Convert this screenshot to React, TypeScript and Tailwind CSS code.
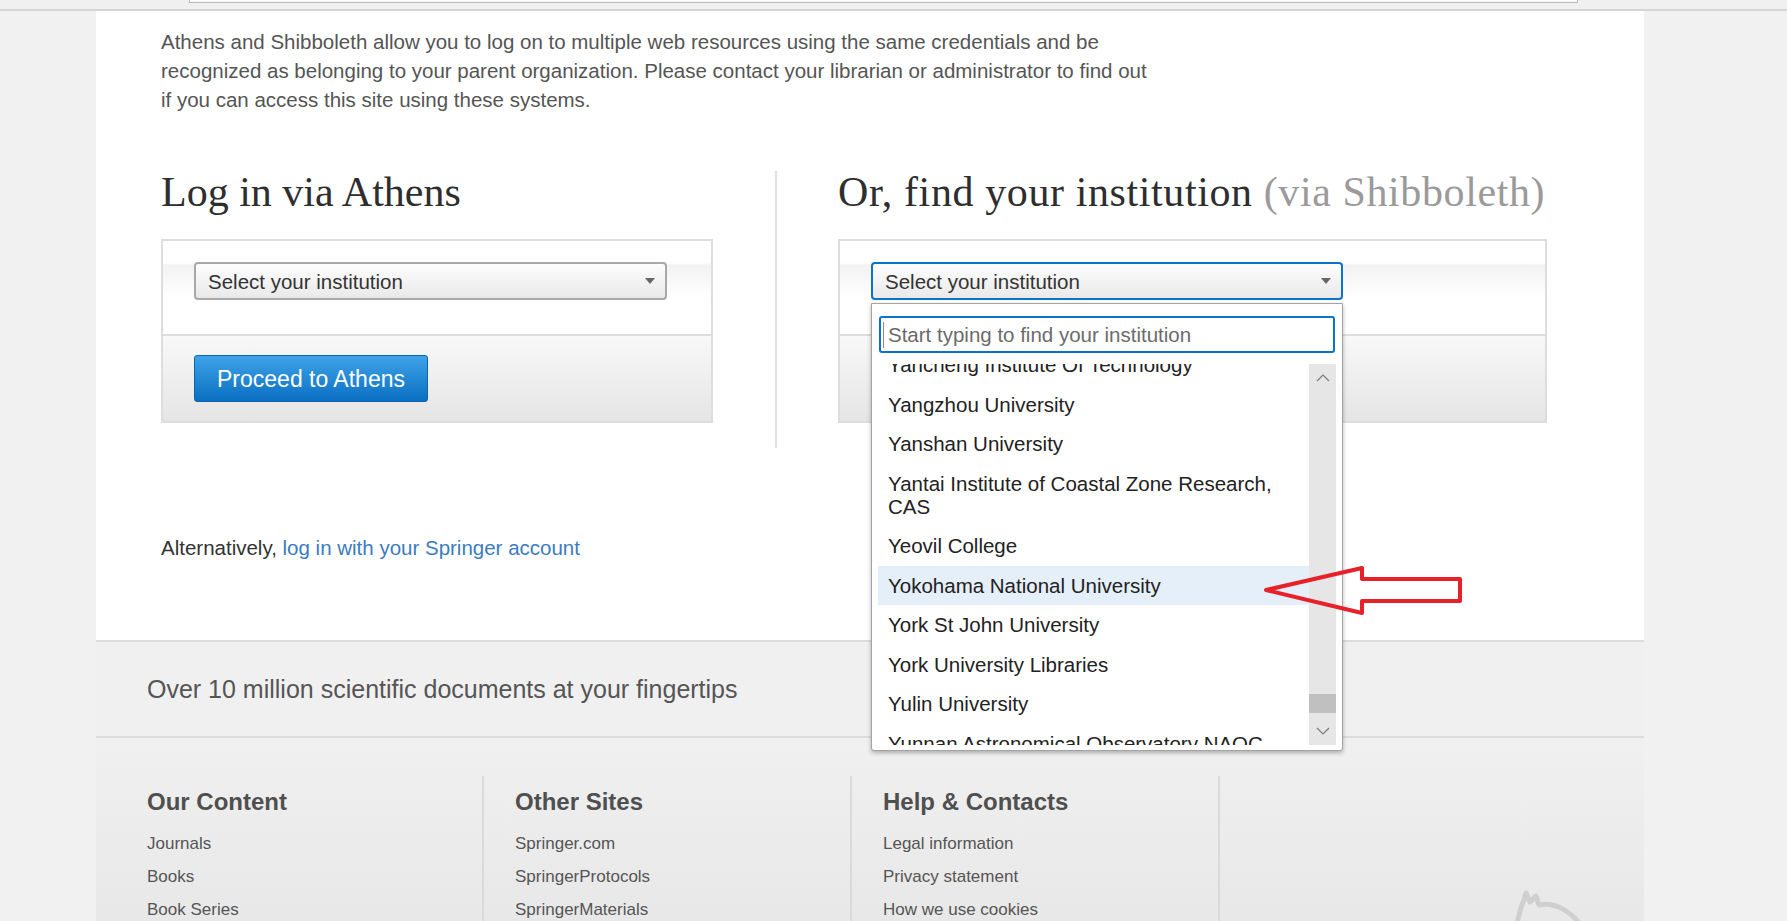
import React from "react";

const listItems: { label: string; active?: boolean }[] = [
  { label: "Yancheng Institute Of Technology" },
  { label: "Yangzhou University" },
  { label: "Yanshan University" },
  { label: "Yantai Institute of Coastal Zone Research, CAS" },
  { label: "Yeovil College" },
  { label: "Yokohama National University", active: true },
  { label: "York St John University" },
  { label: "York University Libraries" },
  { label: "Yulin University" },
  { label: "Yunnan Astronomical Observatory NAOC" },
];

function Caret() {
  return (
    <span className="w-0 h-0 border-l-[5px] border-r-[5px] border-t-[6px] border-l-transparent border-r-transparent border-t-[#666]" />
  );
}

function Chevron({ up }: { up?: boolean }) {
  return (
    <svg width="14" height="8" viewBox="0 0 14 8">
      <polyline
        points={up ? "1,7 7,1 13,7" : "1,1 7,7 13,1"}
        fill="none"
        stroke="#7a7a7a"
        strokeWidth="1.2"
      />
    </svg>
  );
}

function Dropdown() {
  return (
    <div className="absolute left-[-2px] top-[calc(100%+5px)] z-10 w-[472px] h-[448px] bg-white border border-[#a3a3a3] rounded-b-[3px] shadow-[0_2px_4px_rgba(0,0,0,0.28)] pt-[12px]">
      <div className="mx-[7px] h-[37px] border-2 border-[#0b73c9] rounded-[3px] flex items-center pl-[2px]">
        <span className="w-px h-[26px] bg-[#8a8a8a]" />
        <span className="ml-[4px] text-[20.5px] text-[#6b6b6b] leading-[23px]">
          Start typing to find your institution
        </span>
      </div>
      <div className="mx-[6px] mt-[11px] h-[381px] overflow-hidden flex">
        <div className="w-[431px] mt-[-19px]">
          {listItems.map((it) => (
            <div
              key={it.label}
              className={
                "pl-[10px] pr-[10px] py-[8.25px] text-[20.5px] leading-[23px] text-[#222] " +
                (it.active ? "bg-[#e5eff9]" : "")
              }
            >
              {it.label}
            </div>
          ))}
        </div>
        <div className="w-[27px] h-[381px] bg-[#e6e6e6] flex flex-col">
          <div className="h-[28px] flex items-center justify-center">
            <Chevron up />
          </div>
          <div className="h-[302px]" />
          <div className="h-[19px] bg-[#c0c0c0]" />
          <div className="h-[4px]" />
          <div className="h-[28px] flex items-center justify-center">
            <Chevron />
          </div>
        </div>
      </div>
    </div>
  );
}

function SelectBox({ focused, width }: { focused?: boolean; width: string }) {
  return (
    <div
      className={
        "relative h-[38px] rounded-[4px] border-2 bg-[linear-gradient(180deg,#fdfdfd,#e9e9e9)] flex items-center justify-between pl-[12px] pr-[10px] " +
        width +
        " " +
        (focused ? "border-[#0b73c9]" : "border-[#a8a8a8]")
      }
    >
      <span className="text-[20.5px] leading-[23px] text-[#333]">Select your institution</span>
      <Caret />
      {focused && <Dropdown />}
    </div>
  );
}

function LoginBox({
  width,
  selectWidth,
  focused,
  button,
}: {
  width: string;
  selectWidth: string;
  focused?: boolean;
  button?: boolean;
}) {
  return (
    <div className={"border-2 border-[#dddddd] " + width}>
      <div className="h-[95px] pt-[21px] pl-[31px] border-b-2 border-[#dddddd] bg-[linear-gradient(180deg,#ffffff_0px,#ffffff_22px,#f2f2f2_24px,#ffffff_58px)]">
        <SelectBox focused={focused} width={selectWidth} />
      </div>
      <div className="h-[85px] pt-[19px] pl-[31px] bg-[linear-gradient(180deg,#f8f8f8,#e5e5e5)]">
        {button && (
          <button className="w-[234px] h-[47px] rounded-[3px] border border-[#0c64ad] bg-[linear-gradient(180deg,#3fa3e9,#0a6fc1)] text-white text-[23px] leading-[26px] font-['Liberation_Sans',Arial,sans-serif]">
            Proceed to Athens
          </button>
        )}
      </div>
    </div>
  );
}

function FooterCol({ title, links }: { title: string; links: string[] }) {
  return (
    <div className="w-[368px] border-r-2 border-[#dadada] pl-[31px] pt-[12px]">
      <div className="text-[24px] leading-[28px] font-bold text-[#4f4f4f]">{title}</div>
      <div className="mt-[10.5px]">
        {links.map((l) => (
          <div key={l} className="text-[17px] leading-[33px] text-[#555]">
            {l}
          </div>
        ))}
      </div>
    </div>
  );
}

export default function App() {
  return (
    <div className="relative h-[921px] w-full overflow-hidden bg-[#f1f1f1] font-['Liberation_Sans',Arial,sans-serif]">
      {/* top strip */}
      <div className="h-[11px] bg-[#f0f0f0] border-b-2 border-[#d4d4d4]">
        <div className="ml-[189px] w-[1389px] h-[3px] border-x border-b border-[#b8b8b8] bg-[#fafafa]" />
      </div>

      <div className="ml-[96px] w-[1548px]">
        {/* main content */}
        <div className="bg-white pl-[65px] pt-[15.5px] pb-[78.5px]">
          <p className="text-[20.5px] leading-[29px] text-[#555]">
            Athens and Shibboleth allow you to log on to multiple web resources using the same credentials and be
            <br />
            recognized as belonging to your parent organization. Please contact your librarian or administrator to find out
            <br />
            if you can access this site using these systems.
          </p>

          <div className="mt-[54.5px] flex items-start">
            <div className="w-[614px]">
              <h2 className="font-['Liberation_Serif','Times_New_Roman',serif] text-[42px] leading-[48px] text-[#2e2e2e]">
                Log in via Athens
              </h2>
              <div className="mt-[23px]">
                <LoginBox width="w-[552px]" selectWidth="w-[473px]" button />
              </div>
            </div>
            <div className="w-[2px] h-[277px] mt-[3px] bg-[#e2e2e2]" />
            <div className="pl-[61px]">
              <h2 className="font-['Liberation_Serif','Times_New_Roman',serif] text-[42px] leading-[48px] tracking-[0.6px] text-[#2e2e2e]">
                Or, find your institution <span className="text-[#9a9a9a]">(via Shibboleth)</span>
              </h2>
              <div className="mt-[23px]">
                <LoginBox width="w-[709px]" selectWidth="w-[472px]" focused />
              </div>
            </div>
          </div>

          <p className="mt-[84.5px] text-[20.5px] leading-[29px] text-[#333]">
            Alternatively, <span className="text-[#3b7cc2]">log in with your Springer account</span>
          </p>
        </div>

        {/* band */}
        <div className="h-[98px] border-y-2 border-[#dcdcdc] bg-[#f0f0f0] flex items-center pl-[51px]">
          <span className="text-[25px] leading-[29px] text-[#555]">
            Over 10 million scientific documents at your fingertips
          </span>
        </div>

        {/* footer */}
        <div className="h-[200px] bg-[linear-gradient(180deg,#f0f0f0,#e7e7e7)] pl-[20px] pt-[38px] flex">
          <FooterCol title="Our Content" links={["Journals", "Books", "Book Series"]} />
          <FooterCol title="Other Sites" links={["Springer.com", "SpringerProtocols", "SpringerMaterials"]} />
          <FooterCol title="Help & Contacts" links={["Legal information", "Privacy statement", "How we use cookies"]} />
          <div className="pl-[292px] pt-[114px]">
            <svg width="80" height="40" viewBox="0 0 80 40">
              <path
                d="M4 40 C6 28 8 18 12 10 L14 3 L18 12 L24 6 L27 15 C40 12 58 18 72 40"
                fill="none"
                stroke="#cfcfcf"
                strokeWidth="5"
                strokeLinejoin="round"
                strokeLinecap="round"
              />
            </svg>
          </div>
        </div>
      </div>

      {/* red annotation arrow */}
      <svg
        className="absolute left-[1258px] top-[560px] z-20 pointer-events-none"
        width="210"
        height="60"
        viewBox="0 0 210 60"
      >
        <polygon
          points="8,30 104,8 104,19 202,19 202,41 104,41 104,53"
          fill="none"
          stroke="#e8202a"
          strokeWidth="4"
          strokeLinejoin="round"
        />
      </svg>
    </div>
  );
}
